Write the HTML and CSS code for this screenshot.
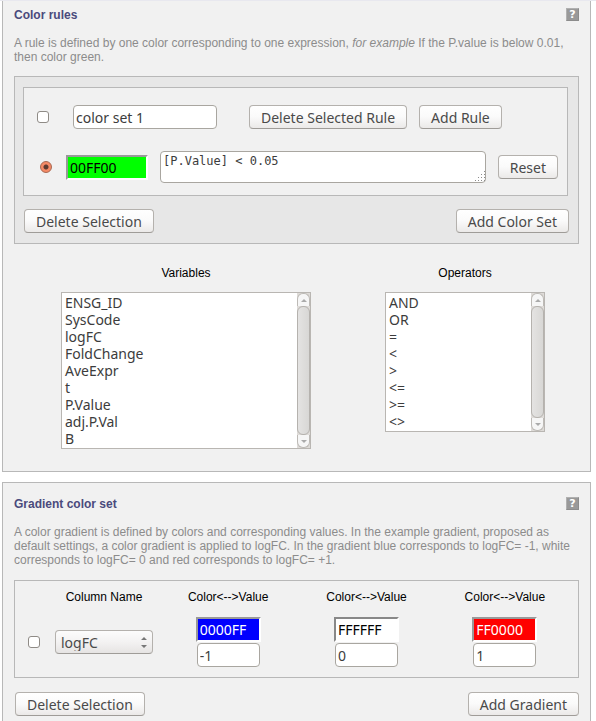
FILE: index.html
```html
<!DOCTYPE html>
<html lang="en">
<head>
<meta charset="utf-8">
<title>Color rules</title>
<link rel="stylesheet" href="styles.css">
</head>
<body>
<section class="panel panel-rules">
  <header class="panel-head">
    <h2>Color rules</h2>
    <button class="help" type="button" aria-label="Help">?</button>
  </header>
  <p class="description">A rule is defined by one color corresponding to one expression, <em>for example</em> If the P.value is below 0.01, then color green.</p>

  <div class="rule-sets">
    <div class="rule-set">
      <div class="rule-row set-row">
        <input class="check" type="checkbox" aria-label="Select color set">
        <input class="field set-name" type="text" value="color set 1" aria-label="Color set name">
        <div class="set-actions">
          <button class="btn" type="button">Delete Selected Rule</button>
          <button class="btn" type="button">Add Rule</button>
        </div>
      </div>
      <div class="rule-row expression-row">
        <input class="radio" type="radio" name="rule" checked aria-label="Select rule">
        <input class="swatch green" type="text" value="00FF00" aria-label="Rule color">
        <div class="expression-wrap">
          <textarea class="field expression" aria-label="Rule expression">[P.Value] &lt; 0.05</textarea>
          <svg class="grip" viewBox="0 0 11 11" aria-hidden="true"><path d="M9 0h1v1h-1zM6 3h1v1h-1zM9 3h1v1h-1zM3 6h1v1h-1zM6 6h1v1h-1zM9 6h1v1h-1zM0 9h1v1h-1zM3 9h1v1h-1zM6 9h1v1h-1zM9 9h1v1h-1z"/></svg>
        </div>
        <button class="btn" type="button">Reset</button>
      </div>
    </div>
    <div class="actions">
      <button class="btn" type="button">Delete Selection</button>
      <button class="btn" type="button">Add Color Set</button>
    </div>
  </div>

  <div class="pickers">
    <div class="picker variables">
      <label for="variables">Variables</label>
      <div class="listbox">
        <select id="variables" size="9">
          <option>ENSG_ID</option>
          <option>SysCode</option>
          <option>logFC</option>
          <option>FoldChange</option>
          <option>AveExpr</option>
          <option>t</option>
          <option>P.Value</option>
          <option>adj.P.Val</option>
          <option>B</option>
        </select>
        <div class="scroll" aria-hidden="true"><span class="step up"></span><span class="thumb"></span><span class="step down"></span></div>
      </div>
    </div>
    <div class="picker operators">
      <label for="operators">Operators</label>
      <div class="listbox">
        <select id="operators" size="8">
          <option>AND</option>
          <option>OR</option>
          <option>=</option>
          <option>&lt;</option>
          <option>&gt;</option>
          <option>&lt;=</option>
          <option>&gt;=</option>
          <option>&lt;&gt;</option>
        </select>
        <div class="scroll" aria-hidden="true"><span class="step up"></span><span class="thumb"></span><span class="step down"></span></div>
      </div>
    </div>
  </div>
</section>

<section class="panel panel-gradient">
  <header class="panel-head">
    <h2>Gradient color set</h2>
    <button class="help" type="button" aria-label="Help">?</button>
  </header>
  <p class="description">A color gradient is defined by colors and corresponding values. In the example gradient, proposed as default settings, a color gradient is applied to logFC. In the gradient blue corresponds to logFC= -1, white corresponds to logFC= 0 and red corresponds to logFC= +1.</p>

  <div class="gradient-box">
    <table class="gradients">
      <thead>
        <tr>
          <th class="col-check"></th>
          <th class="col-name" scope="col">Column Name</th>
          <th scope="col">Color&lt;--&gt;Value</th>
          <th scope="col">Color&lt;--&gt;Value</th>
          <th scope="col">Color&lt;--&gt;Value</th>
        </tr>
      </thead>
      <tbody>
        <tr>
          <td><input class="check" type="checkbox" aria-label="Select gradient"></td>
          <td>
            <div class="dropdown">
              <select class="btn" aria-label="Column name"><option>logFC</option></select>
              <svg class="arrows" viewBox="0 0 6 13" aria-hidden="true"><path d="M0 4L3 1l3 3zM0 9h6l-3 3z"/></svg>
            </div>
          </td>
          <td>
            <div class="stop">
              <input class="swatch blue" type="text" value="0000FF" aria-label="Low color">
              <input class="field" type="text" value="-1" aria-label="Low value">
            </div>
          </td>
          <td>
            <div class="stop">
              <input class="swatch white" type="text" value="FFFFFF" aria-label="Middle color">
              <input class="field" type="text" value="0" aria-label="Middle value">
            </div>
          </td>
          <td>
            <div class="stop">
              <input class="swatch red" type="text" value="FF0000" aria-label="High color">
              <input class="field" type="text" value="1" aria-label="High value">
            </div>
          </td>
        </tr>
      </tbody>
    </table>
  </div>
  <div class="actions">
    <button class="btn" type="button">Delete Selection</button>
    <button class="btn" type="button">Add Gradient</button>
  </div>
</section>
</body>
</html>
```

FILE: styles.css
```css
* {
  box-sizing: border-box;
}

body {
  display: flex;
  flex-direction: column;
  gap: 10px;
  min-height: 100vh;
  margin: 0;
  padding: 0 5px 0 2px;
  border-top: 1px solid #e8e8ef;
  background: #fff;
  color: #000;
  font: 12px/14px "Liberation Sans", Arial, sans-serif;
}

button,
input,
select,
textarea {
  margin: 0;
  color: #3c3c3c;
  font: 14px/17px "Noto Sans", Ubuntu, sans-serif;
}

/* Panels */
.panel {
  padding: 0 11px;
  border: 1px solid #b8b8b8;
  background: #f1f1f1;
}

.panel-rules {
  padding-top: 7px;
  padding-bottom: 22px;
  border-top: 0;
}

.panel-gradient {
  flex: 1;
  padding-top: 14px;
  border-bottom: 0;
}

.panel-head {
  display: flex;
  justify-content: space-between;
  height: 14px;
}

h2 {
  margin: 0;
  color: #4a4a7c;
  font-size: 12px;
  line-height: 14px;
}

.help {
  width: 13px;
  height: 13px;
  padding: 0;
  border: 1px solid #b0b0b0;
  border-right-color: #8c8c8c;
  border-bottom-color: #8c8c8c;
  background: #999;
  color: #fff;
  font: bold 11px/11px "DejaVu Sans", sans-serif;
  text-align: center;
}

.description {
  margin: 14px 0 12px;
  color: #8c8c8c;
}

/* Controls */
.btn {
  height: 24px;
  padding: 0 11px;
  border: 1px solid #b4b1ad;
  border-bottom-color: #9f9c98;
  border-radius: 4px;
  background: linear-gradient(#fff, #fafafa 50%, #ebe9e8);
  color: #4a4a4a;
  white-space: nowrap;
}

.field {
  height: 24px;
  padding: 0 2px;
  border: 1px solid #a9a6a0;
  border-radius: 4px;
  background: #fff;
}

.swatch {
  height: 25px;
  padding: 0 2px;
  border: 2px solid;
  border-color: #999 #fff #fff #999;
  color: #000;
}

.green {
  background: #0f0;
}

.blue {
  background: #00f;
  color: #fff;
}

.white {
  border-color: #888 #fff #fff #888;
  background: #fff;
}

.red {
  background: #f00;
  color: #fff;
}

.check,
.radio {
  flex: none;
  appearance: none;
  width: 12px;
  height: 12px;
  border: 1px solid #8f8b86;
}

.check {
  border-radius: 3px;
  background: #fff;
}

.radio {
  border-color: #a8664f;
  border-radius: 50%;
  background: radial-gradient(circle, #5c3a30 0 2px, #f58a66 3px);
}

.actions {
  display: flex;
  justify-content: space-between;
}

/* Color rules */
.rule-sets {
  padding: 10px 9px 10px 8px;
  border: 1px solid #b8b8b8;
  background: #e7e7e7;
}

.rule-sets .actions {
  padding-left: 1px;
}

.rule-set {
  margin: 0 1px 13px 0;
  padding: 17px 9px 12px 13px;
  border: 1px solid #b8b8b8;
  background: #f1f1f1;
}

.rule-row {
  display: flex;
  align-items: center;
}

.set-row {
  gap: 24px;
  margin-bottom: 22px;
}

.set-name {
  width: 144px;
}

.set-actions {
  display: flex;
  gap: 12px;
  margin-left: 8px;
}

.expression-row {
  gap: 12px;
  padding-left: 3px;
}

.expression-row .radio {
  margin-right: 2px;
}

.expression-row .swatch {
  width: 82px;
}

.expression-wrap {
  position: relative;
  display: flex;
  flex: 1;
}

.expression {
  width: 100%;
  height: 32px;
  resize: none;
  overflow: hidden;
  font: 12px/18px "DejaVu Sans Mono", monospace;
}

.grip {
  position: absolute;
  right: 0;
  bottom: 1px;
  width: 11px;
  height: 11px;
  fill: #8c8c8c;
}

/* Variable and operator lists */
.pickers {
  display: flex;
  align-items: flex-start;
  justify-content: space-between;
  margin-top: 22px;
  padding: 0 34px 0 47px;
}

.picker label {
  display: block;
  margin-bottom: 12px;
  text-align: center;
}

.variables {
  width: 250px;
}

.operators {
  width: 160px;
}

.listbox {
  display: flex;
  border: 1px solid #b9b6b2;
  background: #fff;
}

.listbox select {
  flex: 1;
  min-width: 0;
  height: auto;
  padding: 0 1px 2px;
  border: 0;
  outline: 0;
  background: #fff;
  overflow: hidden;
}

.listbox option {
  min-height: 17px;
  height: 17px;
  padding: 0 2px;
  line-height: 17px;
}

.scroll {
  display: flex;
  flex-direction: column;
  width: 13px;
  background: #dedbd8;
}

.step {
  display: flex;
  align-items: center;
  justify-content: center;
  height: 13px;
  border: 1px solid #bdbab6;
  background: #f6f6f6;
}

.step::before {
  border: 3px solid transparent;
  content: "";
}

.up {
  border-bottom: 0;
  border-radius: 6px 6px 0 0;
}

.up::before {
  border-top: 0;
  border-bottom-color: #aaa;
}

.down {
  border-top: 0;
  border-radius: 0 0 6px 6px;
}

.down::before {
  border-top-color: #aaa;
  border-bottom: 0;
}

.thumb {
  flex: 1;
  border: 1px solid #b5b2ae;
  border-radius: 6px;
  background: linear-gradient(90deg, #e4e3e2, #d8d7d5);
}

/* Gradient color set */
.gradient-box {
  margin: 13px 0 14px;
  padding: 9px 4px 10px 0;
  border: 1px solid #b8b8b8;
}

.panel-gradient .actions {
  padding-left: 1px;
}

.gradients {
  width: 100%;
  border-collapse: collapse;
  table-layout: fixed;
}

.gradients th {
  padding: 0 0 13px;
  font-weight: normal;
}

.gradients td {
  padding: 0;
  text-align: center;
}

.gradients .check {
  display: block;
  margin: 0 auto;
}

.col-check {
  width: 38px;
}

.gradients .col-name {
  width: 106px;
  padding-right: 4px;
}

.dropdown {
  position: relative;
  width: 98px;
  margin-left: 2px;
}

.dropdown select {
  display: block;
  appearance: none;
  width: 100%;
  padding: 0 5px;
  background: linear-gradient(#fcfcfc, #f3f2f2 50%, #e6e4e3);
}

.arrows {
  position: absolute;
  top: 6px;
  right: 6px;
  width: 6px;
  height: 13px;
  fill: #777;
}

.stop {
  display: flex;
  flex-direction: column;
  align-items: center;
  gap: 1px;
}

.stop .swatch {
  width: 65px;
}

.stop .field {
  width: 63px;
}
```
